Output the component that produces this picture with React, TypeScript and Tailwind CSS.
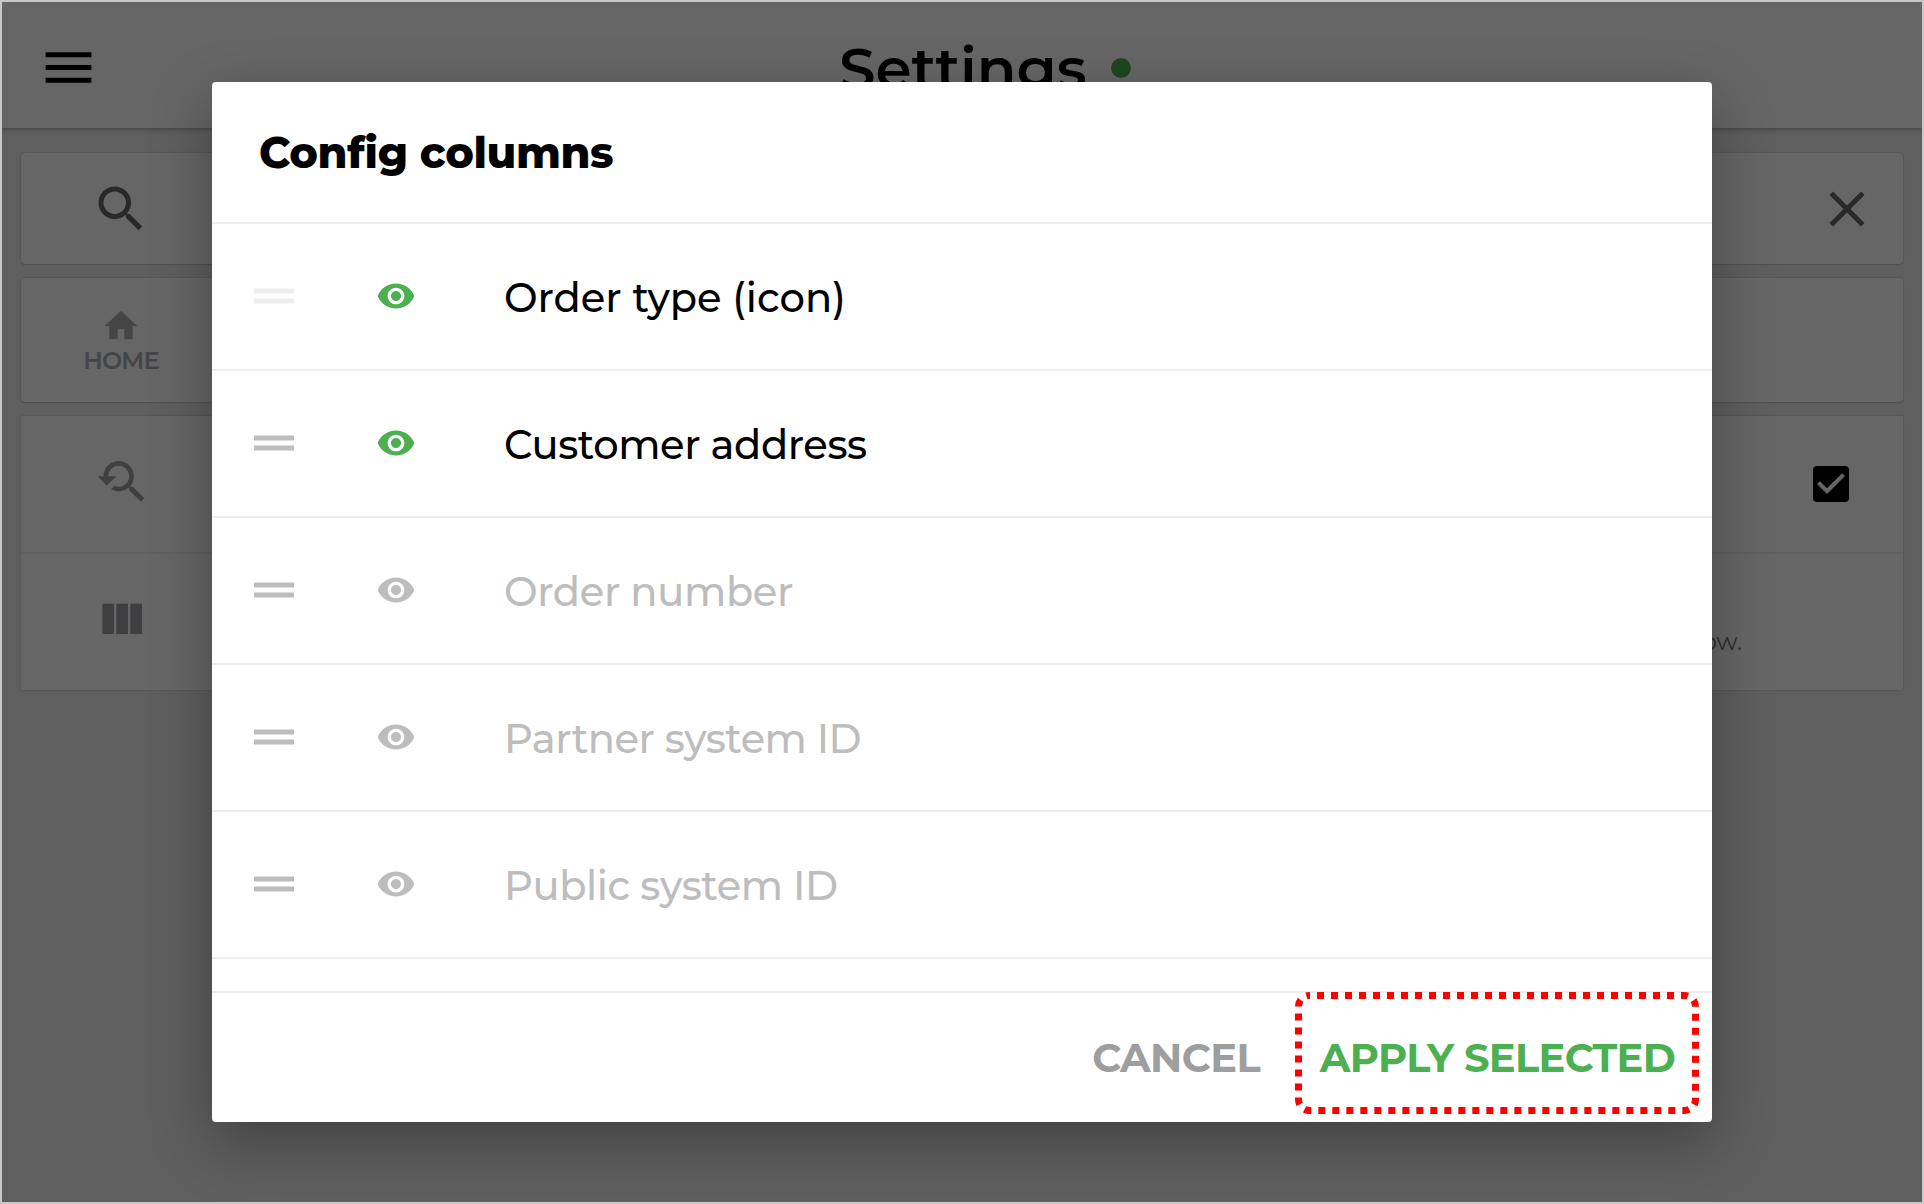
import { MdMenu, MdSearch, MdHome, MdClose, MdCheckBox, MdVisibility, MdDragHandle, MdYoutubeSearchedFor } from "react-icons/md";

type Column = { label: string; visible: boolean; locked?: boolean; tracking: string };

const columns: Column[] = [
  { label: "Order type (icon)", visible: true, locked: true, tracking: "" },
  { label: "Customer address", visible: true, tracking: "tracking-[-0.4px]" },
  { label: "Order number", visible: false, tracking: "tracking-[-0.35px]" },
  { label: "Partner system ID", visible: false, tracking: "tracking-[-0.5px]" },
  { label: "Public system ID", visible: false, tracking: "tracking-[-0.4px]" },
];

function ColumnsIcon() {
  return (
    <svg viewBox="0 0 24 24" className="size-14" fill="currentColor">
      <path d="M10 18h5V5h-5v13zm-6 0h5V5H4v13zM16 5v13h5V5h-5z" />
    </svg>
  );
}

function SettingsPage() {
  return (
    <div className="flex h-full flex-col bg-[#ededed]">
      <header className="relative flex h-[126px] shrink-0 items-center bg-white shadow-[0_2px_3px_rgba(0,0,0,0.2),0_6px_0_rgba(0,0,0,0.03)]">
        <MdMenu className="mt-[5px] ml-9 size-[61px] text-black" />
        <div className="ml-[740px] flex items-center pt-[7px] whitespace-nowrap">
          <h1 className="w-[248px] text-[58px] leading-none font-semibold text-black">Settings</h1>
          <span className="-mt-0.5 ml-6 size-5 rounded-full bg-[#4caf50]" />
        </div>
      </header>
      <main className="flex flex-col px-[19px] pt-[25px]">
        <section className="flex h-[111px] items-center justify-between rounded-[4px] bg-white pr-[26px] pl-[70px] text-[#666] shadow-[0_0_2px_rgba(0,0,0,0.3),0_1px_1px_rgba(0,0,0,0.1)]">
          <MdSearch className="size-[60px]" />
          <MdClose className="size-[60px]" />
        </section>
        <section className="mt-[14px] flex h-[124px] items-center rounded-[4px] bg-white pb-0.5 pl-[60px] text-[#acacac] shadow-[0_0_2px_rgba(0,0,0,0.3),0_1px_1px_rgba(0,0,0,0.1)]">
          <div className="flex w-20 flex-col items-center">
            <MdHome className="size-10" />
            <span className="mt-[3px] text-2xl leading-6 font-semibold tracking-[-0.8px]">HOME</span>
          </div>
        </section>
        <section className="mt-[14px] bg-white shadow-[0_0_2px_rgba(0,0,0,0.25)]">
          <div className="flex h-[138px] items-center justify-between border-b-2 border-[#ededed] pr-12 pl-[72px]">
            <MdYoutubeSearchedFor className="-mt-1 size-14 text-[#9e9fa2]" />
            <MdCheckBox className="size-12 text-black" />
          </div>
          <div className="flex h-[136px] justify-between pr-[161px] pl-[72px] text-[#9e9fa2]">
            <div className="flex items-center pb-1">
              <ColumnsIcon />
            </div>
            <p className="self-end pb-[32px] text-2xl leading-8 text-[#777]">row.</p>
          </div>
        </section>
      </main>
    </div>
  );
}

function ColumnRow({ label, visible, locked, tracking }: Column) {
  return (
    <li className="flex h-[147px] shrink-0 items-center border-b-2 border-[#ededed] pb-0.5 pl-8">
      <MdDragHandle className={`size-[60px] ${locked ? "text-[#ededed]" : "text-[#bdbdbd]"}`} />
      <MdVisibility className={`ml-[72px] size-10 ${visible ? "text-[#4caf50]" : "text-[#bdbdbd]"}`} />
      <span className={`ml-[88px] pt-[5px] text-[40px] leading-[48px] font-medium whitespace-nowrap ${tracking} ${visible ? "text-black" : "text-[#bdbdbd]"}`}>
        {label}
      </span>
    </li>
  );
}

function ConfigDialog() {
  return (
    <div
      role="dialog"
      className="flex h-[1040px] w-[1500px] flex-col rounded-[4px] bg-white shadow-[0_20px_60px_2px_rgba(0,0,0,0.3)]"
    >
      <h2 className="flex h-[142px] shrink-0 items-center border-b-2 border-[#ededed] pl-[47px] text-[43px] leading-none font-extrabold tracking-[-0.35px] text-black">
        Config columns
      </h2>
      <ul className="flex min-h-0 flex-1 flex-col overflow-hidden">
        {columns.map((c) => (
          <ColumnRow key={c.label} {...c} />
        ))}
      </ul>
      <footer className="flex h-[131px] shrink-0 justify-end border-t-2 border-[#ededed] pr-[13px] text-[40px] leading-[48px] whitespace-nowrap">
        <button className="mr-[35px] pt-px font-bold tracking-[-0.6px] text-[#9e9e9e]">CANCEL</button>
        <button className="relative -mt-0.5 flex h-[124px] w-[404px] items-center justify-center pt-2.5 pl-px font-bold tracking-[-0.65px] text-[#4caf50]">
          APPLY SELECTED
          <svg className="absolute inset-0" width="404" height="124" fill="none">
            <rect x="3.5" y="4.5" width="397" height="115" rx="11" stroke="#f00" strokeWidth="7" strokeDasharray="7 7" strokeDashoffset="6.5" />
          </svg>
        </button>
      </footer>
    </div>
  );
}

export default function App() {
  return (
    <div className="relative h-[1204px] w-[1924px] overflow-hidden border-2 border-[#c8c8c8] font-[Montserrat,Inter,sans-serif]">
      <SettingsPage />
      <div className="absolute inset-0 flex items-start justify-center bg-black/60 pt-20">
        <ConfigDialog />
      </div>
    </div>
  );
}
